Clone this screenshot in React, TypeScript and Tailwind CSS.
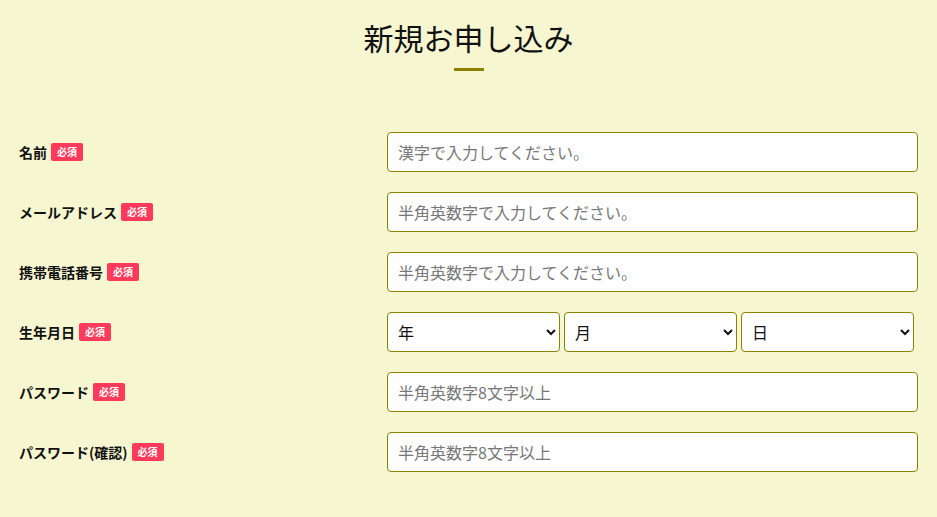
import React from "react";

const jp = "font-['Noto_Sans_CJK_JP','Noto_Sans',sans-serif]";

function Badge() {
  return (
    <span className="ml-1 inline-flex h-[18px] items-center rounded-[2px] bg-[#ff3a5a] px-[6px] text-[10px] font-bold leading-none text-white">
      必須
    </span>
  );
}

function Row({ label, children }: { label: string; children: React.ReactNode }) {
  return (
    <div className="flex items-center">
      <div className="flex w-[368px] shrink-0 items-center text-[14px] font-bold text-[#111]">
        {label}
        <Badge />
      </div>
      <div className="flex-1">{children}</div>
    </div>
  );
}

function TextInput({ placeholder, type = "text" }: { placeholder: string; type?: string }) {
  return (
    <input
      type={type}
      placeholder={placeholder}
      className="h-10 w-full rounded-[4px] border border-[#8c8100] bg-white px-[10px] text-base text-[#111] placeholder:text-[#777] outline-none"
    />
  );
}

function Select({ label }: { label: string }) {
  return (
    <select className="h-10 w-[173px] rounded-[4px] border border-[#8c8100] bg-white px-[6px] text-base text-[#111] outline-none">
      <option>{label}</option>
    </select>
  );
}

export default function App() {
  return (
    <div className={`${jp} min-h-[517px] bg-[#f6f6d0] px-[19px] pt-[15px] pb-10`}>
      <h1 className="text-center text-[30px] leading-[44px] font-normal text-[#111]">新規お申し込み</h1>
      <div className="mx-auto mt-[9px] h-[3px] w-[30px] bg-[#8c8100]" />
      <form className="mt-[61px] flex flex-col gap-5">
        <Row label="名前">
          <TextInput placeholder="漢字で入力してください。" />
        </Row>
        <Row label="メールアドレス">
          <TextInput placeholder="半角英数字で入力してください。" />
        </Row>
        <Row label="携帯電話番号">
          <TextInput placeholder="半角英数字で入力してください。" />
        </Row>
        <Row label="生年月日">
          <div className="flex gap-1">
            <Select label="年" />
            <Select label="月" />
            <Select label="日" />
          </div>
        </Row>
        <Row label="パスワード">
          <TextInput type="password" placeholder="半角英数字8文字以上" />
        </Row>
        <Row label="パスワード(確認)">
          <TextInput type="password" placeholder="半角英数字8文字以上" />
        </Row>
      </form>
    </div>
  );
}
